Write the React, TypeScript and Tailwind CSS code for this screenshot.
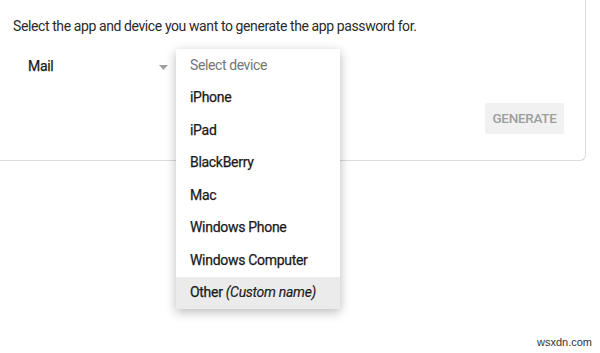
import React from "react";

const items = ["iPhone", "iPad", "BlackBerry", "Mac", "Windows Phone", "Windows Computer"];

export default function App() {
  return (
    <div
      className="relative w-[600px] h-[353px] overflow-hidden bg-white"
      style={{ fontFamily: "Roboto, 'Noto Sans', sans-serif" }}
    >
      <div className="w-[586px] h-[161px] border-r border-b border-[#dcdcdc] rounded-br-[6px] pl-[13px] pt-[17px]">
        <p className="text-[14px] leading-[18px] text-[#2a2a2a] tracking-[-0.4px]">
          Select the app and device you want to generate the app password for.
        </p>
        <div className="flex items-center mt-[21px] pl-[15px] w-[155px] justify-between">
          <span className="text-[14px] tracking-[-0.3px] text-[#1a1a1a] [-webkit-text-stroke:0.25px_#1a1a1a]">Mail</span>
          <svg width="9" height="5" viewBox="0 0 9 5" className="mt-[1px]">
            <path d="M0 0 L9 0 L4.5 5 Z" fill="#a0a0a0" />
          </svg>
        </div>
        <div className="flex justify-end pr-[21px] mt-[26px]">
          <div className="w-[79px] h-[31px] flex items-center justify-center bg-[#f1f1f1] rounded-[2px] text-[13.5px] font-medium text-[#9e9e9e] tracking-[-0.3px]">
            GENERATE
          </div>
        </div>
      </div>

      <div className="absolute left-[176px] top-[49px] w-[164px] bg-white shadow-[0_3px_10px_rgba(0,0,0,0.28)] text-[14px] tracking-[-0.3px]">
        <div className="h-[32.5px] flex items-center pl-[14px] text-[#757575] tracking-[-0.4px]">Select device</div>
        {items.map((t) => (
          <div key={t} className="h-[32.5px] flex items-center pl-[14px] text-[#1a1a1a] [-webkit-text-stroke:0.25px_#1a1a1a]">
            {t}
          </div>
        ))}
        <div className="h-[32.5px] flex items-center pl-[14px] text-[#1a1a1a] bg-[#ebebeb] [-webkit-text-stroke:0.25px_#1a1a1a]">
          Other&nbsp;<span className="italic [-webkit-text-stroke:0.15px_#1a1a1a]">(Custom name)</span>
        </div>
      </div>

      <div className="absolute right-[8px] bottom-[3px] text-[11px] text-[#333]" style={{ fontFamily: "'Liberation Sans', sans-serif" }}>
        wsxdn.com
      </div>
    </div>
  );
}
